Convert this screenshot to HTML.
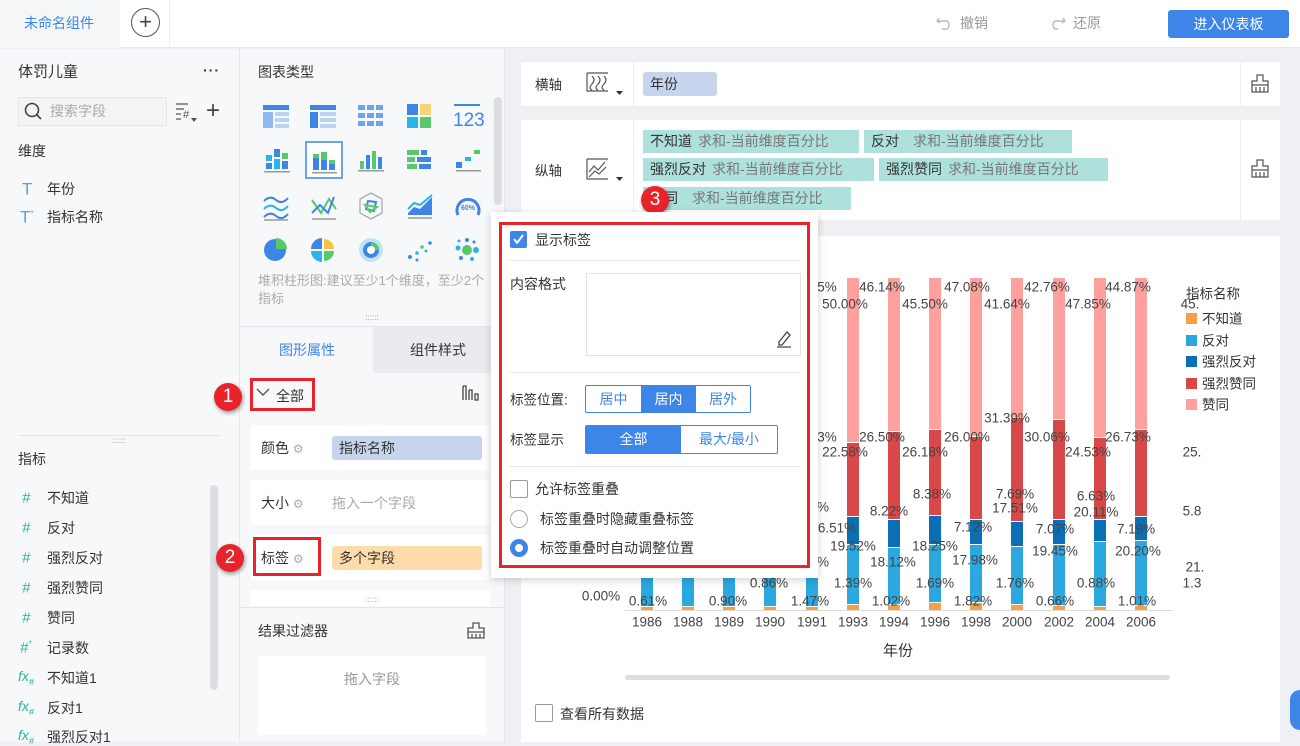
<!DOCTYPE html>
<html><head><meta charset="utf-8"><style>
*{margin:0;padding:0;box-sizing:border-box}
body{width:1300px;height:742px;overflow:hidden;position:relative;background:#eef0f3;font-family:"Liberation Sans","Noto Sans CJK SC",sans-serif;font-size:14px;color:#333}
.a{position:absolute;white-space:nowrap}
.t{position:absolute;white-space:nowrap;line-height:1;transform:translateY(-50%)}
.c{position:absolute;white-space:nowrap;line-height:1;transform:translate(-50%,-50%)}
.g{color:#999}
.pill{position:absolute;background:#aee1db;height:23px;line-height:23px;padding:0 7px;color:#333;font-size:14px}
.pill span{color:#777;margin-left:6px}
.num{position:absolute;width:28px;height:28px;border-radius:50%;background:#e8232b;color:#fff;font-size:19px;text-align:center;line-height:28px;box-shadow:1px 2px 4px rgba(0,0,0,.4)}
.lbl{position:absolute;font-size:13.5px;color:#444;line-height:1;transform:translate(-50%,-50%);white-space:nowrap}
.seg{position:absolute;width:12px}
.hash{color:#2bb0a0;font-style:italic;font-size:15px}
</style></head><body>
<!-- top bar -->
<div class="a" style="left:0;top:0;width:1300px;height:48px;background:#fff;border-bottom:1px solid #e6e8ec"></div>
<div class="a" style="left:0;top:0;width:120px;height:48px;background:#f5f6f8"></div>
<div class="t" style="left:24px;top:23px;color:#3d86e8">未命名组件</div>
<div class="a" style="left:121px;top:0;width:49px;height:48px;border-right:1px solid #eee"></div>
<div class="a" style="left:131px;top:8px;width:29px;height:29px;border:1.5px solid #555;border-radius:50%"></div>
<div class="c" style="left:145.5px;top:22px;font-size:22px;color:#444">+</div>
<svg class="a" style="left:936px;top:14px" width="18" height="16"><path d="M3 4 L1 7 L4 9 M1 7 H11 a5 5 0 0 1 0 8 H6" fill="none" stroke="#bbb" stroke-width="1.4"/></svg>
<div class="t g" style="left:960px;top:23px">撤销</div>
<svg class="a" style="left:1048px;top:14px" width="18" height="16"><path d="M15 4 L17 7 L14 9 M17 7 H7 a5 5 0 0 0 0 8 H10" fill="none" stroke="#bbb" stroke-width="1.4"/></svg>
<div class="t g" style="left:1073px;top:23px">还原</div>
<div class="a" style="left:1168px;top:10px;width:121px;height:28px;background:#3d86e8;border-radius:3px;color:#fff;text-align:center;line-height:28px">进入仪表板</div>

<!-- left panel -->
<div class="a" style="left:0;top:49px;width:240px;height:693px;background:#f7f8fa;border-right:1px solid #e6e8ec"></div>
<div class="t" style="left:18px;top:72px;font-size:15px">体罚儿童</div>
<div class="t" style="left:203px;top:70px;font-weight:bold;letter-spacing:1px">···</div>
<div class="a" style="left:18px;top:97px;width:149px;height:29px;border:1px solid #e3e5e8;background:#f3f4f6"></div>
<svg class="a" style="left:24px;top:102px" width="18" height="18"><circle cx="8" cy="8" r="6.5" fill="none" stroke="#444" stroke-width="1.6"/><path d="M13 13 L17 17" stroke="#444" stroke-width="1.6"/></svg>
<div class="t" style="left:50px;top:111px;color:#aaa">搜索字段</div>
<svg class="a" style="left:175px;top:101px" width="24" height="22"><path d="M1 3H13M1 8H9M1 13H6M1 18H6" stroke="#555" stroke-width="1.3"/><text x="8" y="17" font-size="11" fill="#555" font-family="Liberation Sans">#</text><path d="M16 17H22L19 21Z" fill="#555"/></svg>
<div class="c" style="left:213px;top:111px;font-size:24px;color:#444;font-weight:300">+</div>
<div class="t" style="left:18px;top:151px">维度</div>
<div class="t" style="left:22px;top:189px;color:#5a9de8;font-size:17px">T</div>
<div class="t" style="left:47px;top:189px">年份</div>
<div class="t" style="left:20px;top:217px;color:#5a9de8;font-size:17px">T<sup style="font-size:8px">*</sup></div>
<div class="t" style="left:47px;top:217px">指标名称</div>
<div class="a" style="left:18px;top:435px;width:202px;border-top:1px solid #e3e5e8"></div>
<div class="c g" style="left:119px;top:441px;font-size:8px">::::::</div>
<div class="t" style="left:18px;top:459px">指标</div>
<div class="a" style="left:210px;top:485px;width:8px;height:205px;background:#dcdee2;border-radius:4px"></div>
<div class="t hash" style="left:22px;top:498px">#</div><div class="t" style="left:47px;top:498px">不知道</div>
<div class="t hash" style="left:22px;top:528px">#</div><div class="t" style="left:47px;top:528px">反对</div>
<div class="t hash" style="left:22px;top:558px">#</div><div class="t" style="left:47px;top:558px">强烈反对</div>
<div class="t hash" style="left:22px;top:588px">#</div><div class="t" style="left:47px;top:588px">强烈赞同</div>
<div class="t hash" style="left:22px;top:618px">#</div><div class="t" style="left:47px;top:618px">赞同</div>
<div class="t hash" style="left:20px;top:648px">#<sup style="font-size:8px">*</sup></div><div class="t" style="left:47px;top:648px">记录数</div>
<div class="t hash" style="left:18px;top:678px;font-size:14px">fx<sub style="font-size:9px">#</sub></div><div class="t" style="left:47px;top:678px">不知道1</div>
<div class="t hash" style="left:18px;top:708px;font-size:14px">fx<sub style="font-size:9px">#</sub></div><div class="t" style="left:47px;top:708px">反对1</div>
<div class="t hash" style="left:18px;top:737px;font-size:14px">fx<sub style="font-size:9px">#</sub></div><div class="t" style="left:47px;top:737px">强烈反对1</div>

<!-- column 2 -->
<div class="a" style="left:240px;top:49px;width:265px;height:693px;background:#f7f8fa;border-right:1px solid #e3e5e8"></div>
<div class="t" style="left:258px;top:72px">图表类型</div>
<div class="a" style="left:494px;top:97px;width:8px;height:108px;background:#dcdee2;border-radius:4px"></div>
<svg class="a" style="left:250px;top:95px" width="240" height="175">
<g transform="translate(13,10)"><rect width="26" height="5" fill="#3d86e8"/><rect y="7" width="10" height="16" fill="#8fb9ee"/><rect x="12" y="7" width="14" height="4" fill="#b9d3f5"/><rect x="12" y="13" width="14" height="4" fill="#b9d3f5"/><rect x="12" y="19" width="14" height="4" fill="#b9d3f5"/></g>
<g transform="translate(60,10)"><rect width="26" height="5" fill="#3d86e8"/><rect y="7" width="8" height="16" fill="#3d86e8"/><rect x="10" y="7" width="16" height="4" fill="#b9d3f5"/><rect x="10" y="13" width="16" height="4" fill="#b9d3f5"/><rect x="10" y="19" width="16" height="4" fill="#b9d3f5"/></g>
<g transform="translate(108,10)" fill="#6ea4ea"><rect width="7" height="5"/><rect x="9" width="7" height="5"/><rect x="18" width="7" height="5"/><rect y="8" width="7" height="5"/><rect x="9" y="8" width="7" height="5"/><rect x="18" y="8" width="7" height="5"/><rect y="16" width="7" height="5"/><rect x="9" y="16" width="7" height="5"/><rect x="18" y="16" width="7" height="5"/></g>
<g transform="translate(157,9)"><rect width="11" height="11" fill="#3d86e8"/><rect x="13" width="11" height="11" fill="#f5c542" opacity=".7"/><rect y="13" width="11" height="11" fill="#29b5e8"/><rect x="13" y="13" width="11" height="11" fill="#58c86b"/></g>
<text x="203" y="31" font-size="19" fill="#3d86e8" font-family="Liberation Sans">123</text><rect x="204" y="9" width="26" height="2" fill="#3d86e8"/>
<g transform="translate(16,54)"><rect x="8" width="6" height="8" fill="#3d86e8"/><rect x="8" y="10" width="6" height="10" fill="#29b5e8"/><rect y="6" width="6" height="6" fill="#29b5e8"/><rect y="14" width="6" height="6" fill="#3d86e8"/><rect x="16" y="4" width="6" height="6" fill="#58c86b"/><rect x="16" y="12" width="6" height="8" fill="#3d86e8"/><rect x="-2" y="22" width="26" height="1.5" fill="#999"/></g>
<rect x="56" y="47" width="36" height="36" fill="#fff" stroke="#3d86e8" stroke-width="1.5"/>
<g transform="translate(63,55)"><rect y="8" width="6" height="12" fill="#3d86e8"/><rect y="4" width="6" height="4" fill="#58c86b"/><rect x="8" y="10" width="6" height="10" fill="#3d86e8"/><rect x="8" y="2" width="6" height="8" fill="#58c86b"/><rect x="16" y="14" width="6" height="6" fill="#3d86e8"/><rect x="16" y="10" width="6" height="4" fill="#58c86b"/><rect x="-1" y="22" width="25" height="1.5" fill="#999"/></g>
<g transform="translate(110,54)"><rect y="12" width="4" height="8" fill="#58c86b"/><rect x="6" y="6" width="4" height="14" fill="#3d86e8"/><rect x="12" y="2" width="4" height="18" fill="#58c86b"/><rect x="18" y="8" width="4" height="12" fill="#3d86e8"/><rect x="-2" y="21" width="26" height="1.5" fill="#999"/></g>
<g transform="translate(157,55)"><rect width="12" height="5" fill="#58c86b"/><rect x="14" width="6" height="5" fill="#3d86e8"/><rect y="7" width="8" height="5" fill="#58c86b"/><rect x="10" y="7" width="14" height="5" fill="#3d86e8"/><rect y="14" width="10" height="5" fill="#58c86b"/><rect x="12" y="14" width="12" height="5" fill="#3d86e8"/></g>
<g transform="translate(206,55)"><rect y="12" width="6" height="6" fill="#3d86e8"/><rect x="9" y="7" width="6" height="4" fill="#29b5e8"/><rect x="18" width="6" height="4" fill="#58c86b"/><rect y="20" width="25" height="1.5" fill="#999"/></g>
<g transform="translate(14,100)" fill="none" stroke-width="2"><path d="M0 6 Q6 0 12 5 T24 3" stroke="#3d86e8"/><path d="M0 14 Q6 8 12 13 T24 11" stroke="#29b5e8"/><path d="M0 22 Q6 16 12 21 T24 19" stroke="#3d86e8"/><path d="M0 25H24" stroke="#999" stroke-width="1.5"/></g>
<g transform="translate(62,100)" fill="none" stroke-width="2"><path d="M0 5 L9 18 L17 4 L24 14" stroke="#58c86b"/><path d="M0 18 L8 10 L16 18 L22 2" stroke="#3d86e8"/><path d="M0 24H24" stroke="#999" stroke-width="1.5"/></g>
<g transform="translate(110,98)"><path d="M11 0 L22 6 L22 20 L11 26 L0 20 L0 6Z" fill="none" stroke="#aaa" stroke-width="1.3"/><path d="M8 8 L16 9 L14 18 L6 16Z" fill="none" stroke="#3d86e8" stroke-width="2"/><path d="M5 12 L17 14 L10 19Z" fill="none" stroke="#58c86b" stroke-width="2"/></g>
<g transform="translate(158,100)"><path d="M0 18 L6 12 L12 14 L24 2 L24 20 L0 20Z" fill="#3d86e8"/><path d="M0 14 L6 8 L12 10 L24 0" stroke="#29b5e8" stroke-width="2" fill="none"/><path d="M0 23H24" stroke="#999" stroke-width="1.5"/></g>
<g transform="translate(205,100)"><path d="M3 20 A11 11 0 1 1 23 20" fill="none" stroke="#3d86e8" stroke-width="3"/><text x="13" y="15" text-anchor="middle" font-size="7" fill="#3d86e8" font-family="Liberation Sans" font-weight="bold">60%</text></g>
<g transform="translate(13,143)"><circle cx="12" cy="12" r="11" fill="#3d86e8"/><path d="M13 11 V0 A11 11 0 0 1 24 11Z" fill="#58c86b"/></g>
<g transform="translate(61,143)"><path d="M11 11 V0 A11 11 0 0 0 0 11Z" fill="#3d86e8"/><path d="M13 11 V1 A10 10 0 0 1 23 11Z" fill="#f5c542"/><path d="M13 13 H23 A10 10 0 0 1 13 23Z" fill="#58c86b"/><path d="M11 13 V24 A11 11 0 0 1 0 13Z" fill="#29b5e8"/></g>
<g transform="translate(108,142)"><circle cx="13" cy="13" r="12" fill="#bfe3f3"/><circle cx="13" cy="13" r="8" fill="#3d86e8"/><path d="M13 5 A8 8 0 0 1 21 13 H13Z" fill="#58c86b"/><circle cx="13" cy="13" r="4" fill="#fff"/></g>
<g transform="translate(158,146)" fill="#3d86e8"><circle cx="2" cy="16" r="2"/><circle cx="9" cy="12" r="1.8" fill="#29b5e8"/><circle cx="14" cy="6" r="1.8" fill="#58c86b"/><circle cx="22" cy="2" r="1.8"/><circle cx="9" cy="19" r="1.5"/><circle cx="18" cy="10" r="1.5" fill="#29b5e8"/></g>
<g transform="translate(205,143)" fill="#29b5e8"><circle cx="12" cy="12" r="5" fill="#58c86b"/><circle cx="3" cy="10" r="2.5"/><circle cx="21" cy="12" r="3"/><circle cx="12" cy="2" r="2" fill="#3d86e8"/><circle cx="6" cy="20" r="2" fill="#3d86e8"/><circle cx="17" cy="21" r="2"/><circle cx="19" cy="4" r="1.5" fill="#3d86e8"/><circle cx="4" cy="3" r="1.5"/></g>
</svg>
<div class="a" style="left:258px;top:272px;font-size:13px;color:#aaa;line-height:18px;width:235px;white-space:normal">堆积柱形图:建议至少1个维度，至少2个指标</div>
<div class="c g" style="left:372px;top:318px;font-size:8px">::::::</div>
<div class="a" style="left:240px;top:326px;width:265px;border-top:1px solid #e3e5e8"></div>
<div class="a" style="left:373px;top:327px;width:120px;height:46px;background:#e9ebee"></div>
<div class="c" style="left:307px;top:350px;color:#3d86e8">图形属性</div>
<div class="c" style="left:438px;top:350px">组件样式</div>
<svg class="a" style="left:256px;top:388px" width="14" height="10"><path d="M1 1 L7 7 L13 1" fill="none" stroke="#555" stroke-width="1.4"/></svg>
<div class="t" style="left:276px;top:396px">全部</div>
<div class="a" style="left:250px;top:378px;width:65px;height:33px;border:3px solid #e8232b"></div>
<svg class="a" style="left:461px;top:384px" width="20" height="18"><path d="M2 2V16M2 2H5V16M8 6V16M8 6H11V16M14 10H17V16H14Z" fill="none" stroke="#444" stroke-width="1.3"/></svg>
<div class="a" style="left:251px;top:425px;width:239px;height:45px;background:#fff"></div>
<div class="t" style="left:261px;top:448px">颜色 <span style="color:#aaa;font-size:12px">⚙</span></div>
<div class="a" style="left:332px;top:436px;width:150px;height:24px;background:#c6d4ee;border-radius:3px;line-height:24px;padding-left:7px">指标名称</div>
<div class="a" style="left:251px;top:480px;width:239px;height:45px;background:#fff"></div>
<div class="t" style="left:261px;top:503px">大小 <span style="color:#aaa;font-size:12px">⚙</span></div>
<div class="t" style="left:332px;top:503px;color:#aaa">拖入一个字段</div>
<div class="a" style="left:251px;top:535px;width:239px;height:45px;background:#fff"></div>
<div class="t" style="left:261px;top:558px">标签 <span style="color:#aaa;font-size:12px">⚙</span></div>
<div class="a" style="left:253px;top:537px;width:68px;height:39px;border:3px solid #e8232b"></div>
<div class="a" style="left:332px;top:546px;width:150px;height:24px;background:#fddcab;border-radius:3px;line-height:24px;padding-left:7px">多个字段</div>
<div class="a" style="left:251px;top:590px;width:239px;height:16px;background:#fff"></div>
<div class="c g" style="left:372px;top:600px;font-size:8px">::::::</div>
<div class="a" style="left:240px;top:607px;width:265px;border-top:1px solid #e3e5e8"></div>
<div class="t" style="left:258px;top:631px">结果过滤器</div>
<svg class="a" style="left:467px;top:622px" width="18" height="18"><path d="M6 1H12V6H17V16H1V6H6Z M1 10H17 M5 12V16 M9 12V16 M13 12V16" fill="none" stroke="#555" stroke-width="1.3"/></svg>
<div class="a" style="left:258px;top:656px;width:228px;height:79px;background:#fff"></div>
<div class="c g" style="left:372px;top:679px">拖入字段</div>
<div class="num" style="left:214px;top:383px">1</div>
<div class="num" style="left:216px;top:544px">2</div>

<!-- axis cards -->
<div class="a" style="left:521px;top:62px;width:759px;height:44px;background:#fff"></div>
<div class="t" style="left:535px;top:85px;font-size:13.5px">横轴</div>
<svg class="a" style="left:586px;top:72px" width="40" height="26"><path d="M1 1V19H22 M1 1H22 M6 4 Q10 8 6 12 T6 18 M12 4 Q16 8 12 12 T12 18 M18 4 Q22 8 18 12 T18 18" fill="none" stroke="#555" stroke-width="1.2"/><path d="M30 19H37L33.5 23Z" fill="#333"/></svg>
<div class="a" style="left:633px;top:62px;height:44px;border-left:1px solid #eee"></div>
<div class="a" style="left:643px;top:72px;width:74px;height:24px;background:#c6d4ee;border-radius:3px;line-height:24px;padding-left:7px">年份</div>
<div class="a" style="left:1240px;top:62px;height:44px;border-left:1px solid #eee"></div>
<svg class="a" style="left:1251px;top:74px" width="18" height="20"><path d="M6 1H12V7H17V18H1V7H6Z M1 11H17 M5 13V18 M9 13V18 M13 13V18" fill="none" stroke="#555" stroke-width="1.2"/></svg>
<div class="a" style="left:521px;top:120px;width:759px;height:100px;background:#fff"></div>
<div class="t" style="left:535px;top:171px;font-size:13.5px">纵轴</div>
<svg class="a" style="left:586px;top:158px" width="40" height="26"><path d="M1 1V21H22 M1 1H22 M3 14 L8 8 L12 12 L19 4 M3 19 L9 13 L13 16 L20 9" fill="none" stroke="#555" stroke-width="1.2"/><path d="M30 19H37L33.5 23Z" fill="#333"/></svg>
<div class="a" style="left:633px;top:120px;height:100px;border-left:1px solid #eee"></div>
<div class="a" style="left:1240px;top:120px;height:100px;border-left:1px solid #eee"></div>
<svg class="a" style="left:1251px;top:159px" width="18" height="20"><path d="M6 1H12V7H17V18H1V7H6Z M1 11H17 M5 13V18 M9 13V18 M13 13V18" fill="none" stroke="#555" stroke-width="1.2"/></svg>
<div class="pill" style="left:643px;top:130px;width:216px">不知道<span>求和-当前维度百分比</span></div>
<div class="pill" style="left:864px;top:130px;width:208px">反对<span style="margin-left:14px">求和-当前维度百分比</span></div>
<div class="pill" style="left:643px;top:158px;width:231px">强烈反对<span>求和-当前维度百分比</span></div>
<div class="pill" style="left:879px;top:158px;width:229px">强烈赞同<span>求和-当前维度百分比</span></div>
<div class="pill" style="left:643px;top:187px;width:208px">赞同<span style="margin-left:14px">求和-当前维度百分比</span></div>
<div class="num" style="left:641px;top:186px">3</div>

<!-- chart card -->
<div class="a" style="left:521px;top:236px;width:759px;height:506px;background:#fff;overflow:hidden" id="chart"></div>
<div class="a" style="left:625px;top:610px;width:548px;border-top:1px solid #ddd"></div>
<div class="a" style="left:625px;top:675px;width:545px;height:5px;background:#ddd;border-radius:3px"></div>
<div class="c" style="left:898px;top:651px;font-size:15px">年份</div>
<div class="lbl" style="left:601px;top:596px">0.00%</div>
<div class="a" style="left:535px;top:704px;width:18px;height:18px;border:1px solid #999;border-radius:2px"></div>
<div class="t" style="left:560px;top:714px">查看所有数据</div>
<div class="t" style="left:1186px;top:294px;font-size:13.5px">指标名称</div>
<div class="a" style="left:1186px;top:313px;width:11px;height:11px;background:#f5a046"></div><div class="t" style="left:1202px;top:319px;font-size:13.5px">不知道</div>
<div class="a" style="left:1186px;top:335px;width:11px;height:11px;background:#2ba8e0"></div><div class="t" style="left:1202px;top:341px;font-size:13.5px">反对</div>
<div class="a" style="left:1186px;top:356px;width:11px;height:11px;background:#0a6fb5"></div><div class="t" style="left:1202px;top:362px;font-size:13.5px">强烈反对</div>
<div class="a" style="left:1186px;top:378px;width:11px;height:11px;background:#d94848"></div><div class="t" style="left:1202px;top:384px;font-size:13.5px">强烈赞同</div>
<div class="a" style="left:1186px;top:399px;width:11px;height:11px;background:#fda09e"></div><div class="t" style="left:1202px;top:405px;font-size:13.5px">赞同</div>
<div class="a" style="left:1290px;top:690px;width:20px;height:40px;background:#3d86e8;border-radius:10px"></div>

<div id="bars"></div>
<div style="position:absolute;left:0;top:0;width:1280px;height:742px;overflow:hidden;pointer-events:none">
<div class="lbl" style="left:827px;top:287px">5%</div><div class="lbl" style="left:882px;top:287px">46.14%</div><div class="lbl" style="left:967px;top:287px">47.08%</div><div class="lbl" style="left:1047px;top:287px">42.76%</div><div class="lbl" style="left:1128px;top:287px">44.87%</div><div class="lbl" style="left:1190px;top:304px">45.</div>
<div class="lbl" style="left:845px;top:304px">50.00%</div><div class="lbl" style="left:925px;top:304px">45.50%</div><div class="lbl" style="left:1007px;top:304px">41.64%</div><div class="lbl" style="left:1088px;top:304px">47.85%</div>
<div class="lbl" style="left:1007px;top:418px">31.39%</div>
<div class="lbl" style="left:827px;top:437px">3%</div><div class="lbl" style="left:882px;top:437px">26.50%</div><div class="lbl" style="left:967px;top:437px">26.00%</div><div class="lbl" style="left:1047px;top:437px">30.06%</div><div class="lbl" style="left:1128px;top:437px">26.73%</div>
<div class="lbl" style="left:845px;top:452px">22.58%</div><div class="lbl" style="left:925px;top:452px">26.18%</div><div class="lbl" style="left:1088px;top:452px">24.53%</div><div class="lbl" style="left:1192px;top:452px">25.</div>
<div class="lbl" style="left:932px;top:494px">8.38%</div><div class="lbl" style="left:1015px;top:494px">7.69%</div><div class="lbl" style="left:1096px;top:496px">6.63%</div>
<div class="lbl" style="left:823px;top:507px">%</div><div class="lbl" style="left:889px;top:511px">8.22%</div><div class="lbl" style="left:1015px;top:508px">17.51%</div><div class="lbl" style="left:1096px;top:512px">20.11%</div><div class="lbl" style="left:1192px;top:511px">5.8</div>
<div class="lbl" style="left:837px;top:528px">6.51%</div><div class="lbl" style="left:973px;top:527px">7.12%</div><div class="lbl" style="left:1055px;top:529px">7.07%</div><div class="lbl" style="left:1136px;top:529px">7.19%</div>
<div class="lbl" style="left:853px;top:546px">19.52%</div><div class="lbl" style="left:935px;top:546px">18.25%</div><div class="lbl" style="left:1055px;top:551px">19.45%</div><div class="lbl" style="left:1138px;top:551px">20.20%</div>
<div class="lbl" style="left:823px;top:562px">%</div><div class="lbl" style="left:893px;top:562px">18.12%</div><div class="lbl" style="left:975px;top:560px">17.98%</div><div class="lbl" style="left:1195px;top:567px">21.</div>
<div class="lbl" style="left:769px;top:583px">0.86%</div><div class="lbl" style="left:853px;top:583px">1.39%</div><div class="lbl" style="left:935px;top:583px">1.69%</div><div class="lbl" style="left:1015px;top:583px">1.76%</div><div class="lbl" style="left:1096px;top:583px">0.88%</div><div class="lbl" style="left:1192px;top:583px">1.3</div>
<div class="lbl" style="left:648px;top:601px">0.61%</div><div class="lbl" style="left:728px;top:601px">0.90%</div><div class="lbl" style="left:810px;top:601px">1.47%</div><div class="lbl" style="left:891px;top:601px">1.02%</div><div class="lbl" style="left:973px;top:601px">1.82%</div><div class="lbl" style="left:1055px;top:601px">0.66%</div><div class="lbl" style="left:1137px;top:601px">1.01%</div>
</div>
<div style="position:absolute;left:0;top:0">
<div class="lbl" style="left:647px;top:622px">1986</div><div class="lbl" style="left:688px;top:622px">1988</div><div class="lbl" style="left:729px;top:622px">1989</div><div class="lbl" style="left:770px;top:622px">1990</div><div class="lbl" style="left:812px;top:622px">1991</div><div class="lbl" style="left:853px;top:622px">1993</div><div class="lbl" style="left:894px;top:622px">1994</div><div class="lbl" style="left:935px;top:622px">1996</div><div class="lbl" style="left:976px;top:622px">1998</div><div class="lbl" style="left:1017px;top:622px">2000</div><div class="lbl" style="left:1059px;top:622px">2002</div><div class="lbl" style="left:1100px;top:622px">2004</div><div class="lbl" style="left:1141px;top:622px">2006</div>
</div>

<!-- bars (static) -->
<svg class="a" style="left:0;top:0;z-index:0" width="1300" height="742">
<g id="b">
</g>
</svg>

<!-- popup -->
<div class="a" style="left:491px;top:212px;width:327px;height:366px;background:#fff;box-shadow:0 2px 8px rgba(0,0,0,.18);z-index:5">
<div class="a" style="left:8px;top:10px;width:311px;height:346px;border:3px solid #e8232b"></div>
<div class="a" style="left:19px;top:19px;width:17px;height:17px;background:#3d86e8;border-radius:2px"></div>
<svg class="a" style="left:21px;top:21px" width="13" height="13"><path d="M2 6 L5 10 L11 2" fill="none" stroke="#fff" stroke-width="2"/></svg>
<div class="t" style="left:44px;top:28px">显示标签</div>
<div class="a" style="left:18px;top:48px;width:292px;border-top:1px solid #e6e6e6"></div>
<div class="t" style="left:19px;top:72px">内容格式</div>
<div class="a" style="left:95px;top:61px;width:215px;height:83px;border:1px solid #e3e3e3"></div>
<svg class="a" style="left:284px;top:117px" width="18" height="20"><path d="M4 13 L12 3 L15 6 L7 16 L4 16Z M2 18H16" fill="none" stroke="#444" stroke-width="1.3"/></svg>
<div class="a" style="left:18px;top:160px;width:292px;border-top:1px solid #e6e6e6"></div>
<div class="t" style="left:19px;top:188px;font-size:13.5px">标签位置:</div>
<div class="a" style="left:94px;top:173px;width:166px;height:28px;border:1px solid #3d86e8;display:flex;border-radius:2px">
<div style="width:55px;text-align:center;line-height:26px;color:#3d86e8">居中</div><div style="width:55px;text-align:center;line-height:26px;color:#fff;background:#3d86e8">居内</div><div style="width:54px;text-align:center;line-height:26px;color:#3d86e8">居外</div></div>
<div class="t" style="left:19px;top:228px;font-size:13.5px">标签显示</div>
<div class="a" style="left:94px;top:213px;width:193px;height:29px;border:1px solid #3d86e8;display:flex;border-radius:2px">
<div style="width:95px;text-align:center;line-height:27px;color:#fff;background:#3d86e8">全部</div><div style="width:96px;text-align:center;line-height:27px;color:#3d86e8">最大/最小</div></div>
<div class="a" style="left:18px;top:254px;width:292px;border-top:1px solid #e6e6e6"></div>
<div class="a" style="left:19px;top:268px;width:18px;height:18px;border:1px solid #999;border-radius:2px"></div>
<div class="t" style="left:44px;top:277px">允许标签重叠</div>
<div class="a" style="left:19px;top:298px;width:18px;height:18px;border:1px solid #aaa;border-radius:50%"></div>
<div class="t" style="left:49px;top:307px">标签重叠时隐藏重叠标签</div>
<div class="a" style="left:19px;top:327px;width:18px;height:18px;border:5px solid #3d86e8;border-radius:50%"></div>
<div class="t" style="left:49px;top:336px">标签重叠时自动调整位置</div>
</div>
<svg class="a" style="left:0;top:0;z-index:1" width="1300" height="742">
<g>
<!-- x, redTop, darkTop, lightTop, orangeTop -->
<g fill="#fda09e"><rect x="641" y="278" width="12" height="161"/><rect x="682" y="278" width="12" height="161"/><rect x="723" y="278" width="12" height="161"/><rect x="764" y="278" width="12" height="161"/><rect x="806" y="278" width="12" height="161"/><rect x="847" y="278" width="12" height="164"/><rect x="888" y="278" width="12" height="153"/><rect x="929" y="278" width="12" height="151"/><rect x="970" y="278" width="12" height="158"/><rect x="1011" y="278" width="12" height="139"/><rect x="1053" y="278" width="12" height="141"/><rect x="1094" y="278" width="12" height="159"/><rect x="1135" y="278" width="12" height="151"/></g>
<g fill="#d94848"><rect x="641" y="440" width="12" height="74"/><rect x="682" y="440" width="12" height="74"/><rect x="723" y="440" width="12" height="74"/><rect x="764" y="440" width="12" height="74"/><rect x="806" y="440" width="12" height="74"/><rect x="847" y="443" width="12" height="73"/><rect x="888" y="432" width="12" height="87"/><rect x="929" y="430" width="12" height="85"/><rect x="970" y="437" width="12" height="82"/><rect x="1011" y="418" width="12" height="103"/><rect x="1053" y="420" width="12" height="99"/><rect x="1094" y="438" width="12" height="81"/><rect x="1135" y="430" width="12" height="86"/></g>
<g fill="#0a6fb5"><rect x="641" y="515" width="12" height="29"/><rect x="682" y="515" width="12" height="29"/><rect x="723" y="515" width="12" height="29"/><rect x="764" y="515" width="12" height="29"/><rect x="806" y="515" width="12" height="29"/><rect x="847" y="517" width="12" height="27"/><rect x="888" y="520" width="12" height="27"/><rect x="929" y="516" width="12" height="28"/><rect x="970" y="520" width="12" height="24"/><rect x="1011" y="522" width="12" height="24"/><rect x="1053" y="520" width="12" height="24"/><rect x="1094" y="520" width="12" height="21"/><rect x="1135" y="517" width="12" height="23"/></g>
<g fill="#2ba8e0"><rect x="641" y="545" width="12" height="61"/><rect x="682" y="545" width="12" height="61"/><rect x="723" y="545" width="12" height="61"/><rect x="764" y="545" width="12" height="61"/><rect x="806" y="545" width="12" height="61"/><rect x="847" y="545" width="12" height="59"/><rect x="888" y="548" width="12" height="56"/><rect x="929" y="545" width="12" height="57"/><rect x="970" y="545" width="12" height="57"/><rect x="1011" y="547" width="12" height="57"/><rect x="1053" y="545" width="12" height="60"/><rect x="1094" y="542" width="12" height="64"/><rect x="1135" y="541" width="12" height="64"/></g>
<g fill="#f5a046"><rect x="641" y="607" width="12" height="3"/><rect x="682" y="607" width="12" height="3"/><rect x="723" y="607" width="12" height="3"/><rect x="764" y="607" width="12" height="3"/><rect x="806" y="607" width="12" height="3"/><rect x="847" y="605" width="12" height="5"/><rect x="888" y="605" width="12" height="5"/><rect x="929" y="603" width="12" height="7"/><rect x="970" y="603" width="12" height="7"/><rect x="1011" y="605" width="12" height="5"/><rect x="1053" y="606" width="12" height="4"/><rect x="1094" y="607" width="12" height="3"/><rect x="1135" y="606" width="12" height="4"/></g>
</g>
</svg>
<style>.lbl{z-index:2}</style>
</body></html>
